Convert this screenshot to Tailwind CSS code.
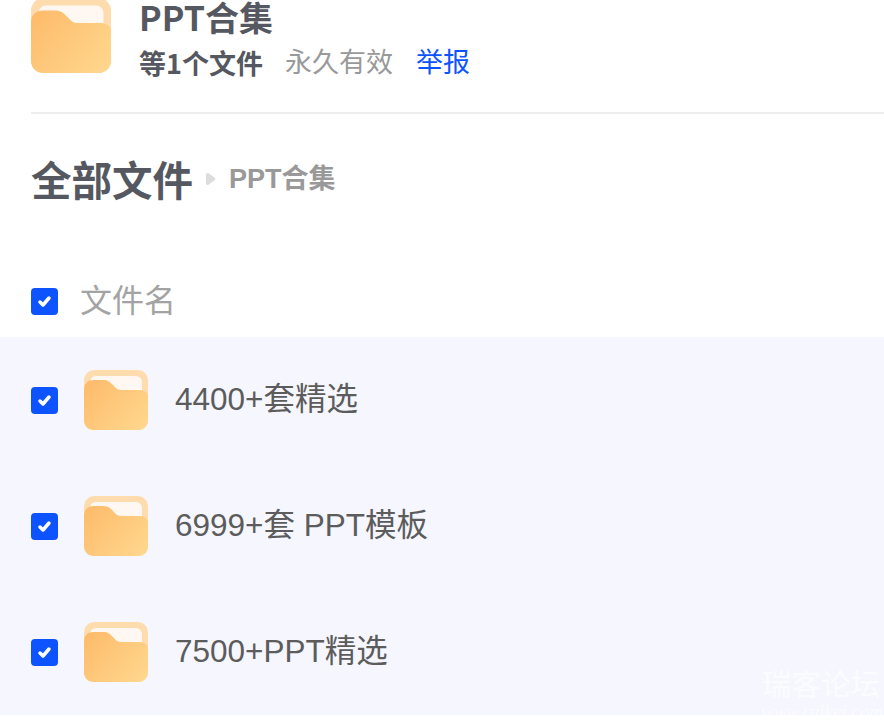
<!DOCTYPE html>
<html>
<head>
  <meta charset="UTF-8">
  <title>PPT合集</title>
  <script src="https://cdn.jsdelivr.net/npm/@tailwindcss/browser@4"></script>
</head>
<body class="bg-white font-['Liberation_Sans','Noto_Sans_CJK_SC',sans-serif] overflow-hidden">
  <svg class="absolute w-0 h-0">
    <defs>
      <linearGradient id="fold" x1="0" y1="0.1" x2="1" y2="0.8">
        <stop offset="0" stop-color="#febb6b"/>
        <stop offset="1" stop-color="#fed68c"/>
      </linearGradient>
      <symbol id="folder" viewBox="0 0 64 60">
        <rect width="64" height="60" rx="10" fill="#ffdcae"/>
        <rect x="6" y="6" width="52" height="30" rx="6" fill="#fff8f2"/>
        <path d="M0 20C0 13 4 10 10 10H19C24 10 26 12 29 15C31 17 33 20 37 20H55C60 20 64 22 64 27V50C64 56 60 60 54 60H10C4 60 0 56 0 50Z" fill="url(#fold)"/>
      </symbol>
    </defs>
  </svg>

  <div class="h-[724px] w-[884px] relative overflow-hidden">
    <!-- 头部 -->
    <div class="ml-[31px] -mt-[2px] h-[116px] border-b-2 border-[#eeeeee] flex items-start">
      <svg class="w-[80px] h-[75px] shrink-0"><use href="#folder"/></svg>
      <div class="ml-[28px] -mt-[5px]">
        <h1 class="text-[34px] leading-[48px] font-bold text-[#555860] font-['Noto_Sans_CJK_SC',sans-serif]">PPT合集</h1>
        <div class="flex items-center gap-[23px] text-[27px] leading-[38px] mt-[3px]">
          <span class="font-bold text-[#555860] font-['Noto_Sans_CJK_SC',sans-serif] -mr-[1px]">等1个文件</span>
          <span class="text-[#999999]">永久有效</span>
          <a class="text-[#0d53ff]">举报</a>
        </div>
      </div>
    </div>

    <!-- 路径 -->
    <div class="ml-[31px] mt-[35px] h-[60px] flex items-center">
      <span class="text-[40.500px] font-bold text-[#555860] font-['Noto_Sans_CJK_SC',sans-serif]">全部文件</span>
      <svg class="w-[11px] h-[14px] ml-[12px] mr-[13px]" viewBox="0 0 11 14"><path d="M1 2.500C1 1 2.500.5 3.500 1.200L9.600 5.800C10.600 6.500 10.600 7.500 9.600 8.200L3.500 12.800C2.500 13.500 1 13 1 11.500Z" fill="#dddddd"/></svg>
      <span class="text-[27px] font-bold text-[#999999] mt-[1px]">PPT合集</span>
    </div>

    <!-- 表头 -->
    <div class="ml-[31px] mt-[64px] h-[64px] flex items-start">
      <span class="mt-[15px] w-[27px] h-[27px] rounded-[4px] bg-[#0d53ff] flex items-center justify-center">
        <svg class="w-[15px] h-[13px]" viewBox="0 0 15 13"><path d="M3 7L6 10L12 3" fill="none" stroke="#fff" stroke-width="3.500" stroke-linecap="round" stroke-linejoin="round"/></svg>
      </span>
      <span class="ml-[22px] text-[32px] leading-[44px] mt-[6px] text-[#a3a3a3]">文件名</span>
    </div>

    <!-- 列表 -->
    <ul class="bg-[#f5f6fe] h-[378px]">
      <li class="h-[126px] pl-[31px] flex items-center">
        <span class="w-[27px] h-[27px] rounded-[4px] bg-[#0d53ff] flex items-center justify-center">
          <svg class="w-[15px] h-[13px]" viewBox="0 0 15 13"><path d="M3 7L6 10L12 3" fill="none" stroke="#fff" stroke-width="3.500" stroke-linecap="round" stroke-linejoin="round"/></svg>
        </span>
        <svg class="w-[64px] h-[60px] ml-[26px]"><use href="#folder"/></svg>
        <span class="ml-[27px] text-[31.500px] text-[#5c5c5c]">4400+套精选</span>
      </li>
      <li class="h-[126px] pl-[31px] flex items-center">
        <span class="w-[27px] h-[27px] rounded-[4px] bg-[#0d53ff] flex items-center justify-center">
          <svg class="w-[15px] h-[13px]" viewBox="0 0 15 13"><path d="M3 7L6 10L12 3" fill="none" stroke="#fff" stroke-width="3.500" stroke-linecap="round" stroke-linejoin="round"/></svg>
        </span>
        <svg class="w-[64px] h-[60px] ml-[26px]"><use href="#folder"/></svg>
        <span class="ml-[27px] text-[31.500px] text-[#5c5c5c]">6999+套 PPT模板</span>
      </li>
      <li class="h-[126px] pl-[31px] flex items-center">
        <span class="w-[27px] h-[27px] rounded-[4px] bg-[#0d53ff] flex items-center justify-center">
          <svg class="w-[15px] h-[13px]" viewBox="0 0 15 13"><path d="M3 7L6 10L12 3" fill="none" stroke="#fff" stroke-width="3.500" stroke-linecap="round" stroke-linejoin="round"/></svg>
        </span>
        <svg class="w-[64px] h-[60px] ml-[26px]"><use href="#folder"/></svg>
        <span class="ml-[27px] text-[31.500px] text-[#5c5c5c]">7500+PPT精选</span>
      </li>
    </ul>

    <!-- 水印 -->
    <div class="absolute left-[761px] top-[668px] w-[120px] text-white/70 text-center">
      <div class="text-[29.500px] leading-[34px] whitespace-nowrap">瑞客论坛</div>
      <div class="text-[19px] leading-[19px] italic font-['Liberation_Serif',serif] whitespace-nowrap">www.ruikei.com</div>
    </div>
  </div>
</body>
</html>
